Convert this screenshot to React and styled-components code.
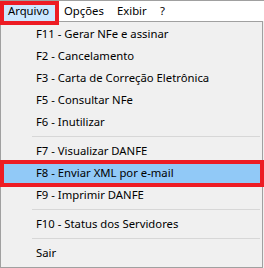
import React from 'react'
import styled, { createGlobalStyle } from 'styled-components'

const GlobalStyle = createGlobalStyle`
  html, body {
    margin: 0;
    padding: 0;
    background: #ffffff;
  }
  body {
    font-family: 'Segoe UI', 'Noto Sans', sans-serif;
    font-size: 11.3px;
    color: #000000;
  }
`

const Frame = styled.div`
  width: 264px;
  height: 268px;
  overflow: hidden;
  background: #f0f0f0;
`

const MenuBar = styled.div`
  display: flex;
  height: 20px;
  padding-left: 1px;
  border-top: 1px solid #a0a0a0;
  background: #ffffff;
`

const MenuTitle = styled.div`
  position: relative;
  box-sizing: border-box;
  width: ${(p) => p.$w}px;
  padding-left: 7px;
  line-height: 20px;
  background: ${(p) => (p.$open ? '#cce8ff' : 'transparent')};

  ${(p) =>
    p.$marked &&
    `
    &::after {
      content: '';
      position: absolute;
      top: 0;
      left: -1px;
      right: -2px;
      bottom: -4px;
      border: 4px solid #ed1c24;
      z-index: 2;
    }
  `}
`

const Dropdown = styled.div`
  box-sizing: border-box;
  width: 263px;
  padding: 1px 0 3px;
  border: 1px solid #a0a0a0;
  background: #f0f0f0;
`

const Item = styled.div`
  position: relative;
  height: 22px;
  padding-left: 35px;
  line-height: 22px;
  white-space: nowrap;
  background: ${(p) => (p.$active ? '#91c9f7' : 'transparent')};

  ${(p) =>
    p.$marked &&
    `
    &::after {
      content: '';
      position: absolute;
      top: -2px;
      bottom: -3px;
      left: -1px;
      right: -2px;
      border: 4px solid #ed1c24;
    }
  `}
`

const Separator = styled.div`
  height: 7px;
  display: flex;
  align-items: center;

  &::before {
    content: '';
    flex: 1;
    height: 1px;
    margin: 0 2px 0 31px;
    background: #d7d7d7;
  }
`

const menus = [
  { label: 'Arquivo', w: 56 },
  { label: 'Opções', w: 53 },
  { label: 'Exibir', w: 43 },
  { label: '?', w: 20 },
]

const entries = [
  'F11 - Gerar NFe e assinar',
  'F2 - Cancelamento',
  'F3 - Carta de Correção Eletrônica',
  'F5 - Consultar NFe',
  'F6 - Inutilizar',
  '-',
  'F7 - Visualizar DANFE',
  'F8 - Enviar XML por e-mail',
  'F9 - Imprimir DANFE',
  '-',
  'F10 - Status dos Servidores',
  '-',
  'Sair',
]

const App = () => {
  return (
    <Frame>
      <GlobalStyle />
      <MenuBar>
        {menus.map((m, i) => (
          <MenuTitle key={m.label} $w={m.w} $open={i === 0} $marked={i === 0}>
            {m.label}
          </MenuTitle>
        ))}
      </MenuBar>
      <Dropdown>
        {entries.map((e, i) =>
          e === '-' ? (
            <Separator key={i} />
          ) : (
            <Item key={i} $active={e.startsWith('F8')} $marked={e.startsWith('F8')}>
              {e}
            </Item>
          )
        )}
      </Dropdown>
    </Frame>
  )
}

export default App
